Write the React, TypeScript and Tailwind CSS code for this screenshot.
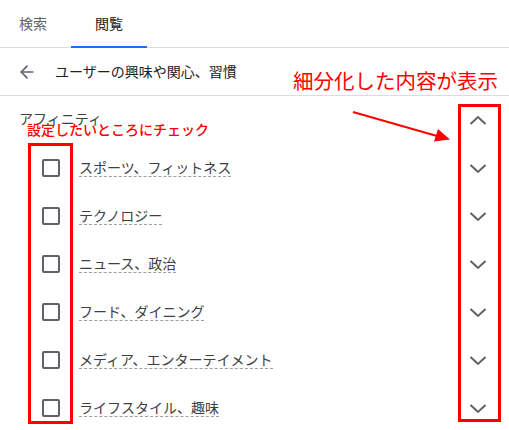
import { ArrowLeft } from 'lucide-react';

const items = [
  'スポーツ、フィットネス',
  'テクノロジー',
  'ニュース、政治',
  'フード、ダイニング',
  'メディア、エンターテイメント',
  'ライフスタイル、趣味',
];

function Chevron({ up }: { up?: boolean }) {
  return (
    <svg width="24" height="24" viewBox="0 0 24 24" className="text-[#5f6368]">
      {up ? (
        <polyline points="4.5,16 12,9 19.5,16" fill="none" stroke="currentColor" strokeWidth="2" />
      ) : (
        <polyline points="4.5,9 12,16 19.5,9" fill="none" stroke="currentColor" strokeWidth="2" />
      )}
    </svg>
  );
}

export default function App() {
  return (
    <div
      className="relative w-[509px] h-[430px] overflow-hidden bg-white text-[14px]"
      style={{ fontFamily: '"Noto Sans CJK JP", "Noto Sans", sans-serif' }}
    >
      {/* Tabs */}
      <div className="flex h-[48px] border-b border-[#dadce0]">
        <div className="w-[71px] pl-[19px] flex items-center text-[#5f6368]">検索</div>
        <div className="relative w-[76px] flex items-center justify-center text-[#202124]">
          閲覧
          <div className="absolute left-0 right-0 bottom-[-1px] h-[2px] bg-[#1a73e8]" />
        </div>
      </div>

      {/* Breadcrumb */}
      <div className="flex items-center h-[48px] border-b border-[#dadce0] pl-[17px]">
        <ArrowLeft className="w-[20px] h-[20px] text-[#5f6368]" strokeWidth={2} />
        <span className="ml-[18px] text-[#202124]">ユーザーの興味や関心、習慣</span>
      </div>

      {/* Affinity heading */}
      <div className="flex items-center justify-between h-[48px] pl-[19px] pr-[19px]">
        <span className="text-[#3c4043] -mt-[4px]">アフィニティ</span>
        <Chevron up />
      </div>

      {items.map((label) => (
        <div key={label} className="flex items-center h-[48px] pl-[42px] pr-[19px]">
          <div className="w-[18px] h-[18px] border-2 border-[#5f6368] rounded-[2px] shrink-0" />
          <span className="ml-[19px] -mt-[2px] text-[#3c4043] leading-[18px] border-b border-dashed border-[#9aa0a6]">
            {label}
          </span>
          <div className="ml-auto">
            <Chevron />
          </div>
        </div>
      ))}

      {/* Annotations */}
      <div className="absolute left-[293px] top-[67px] text-[20.5px] leading-[26px] text-[#ff0000] whitespace-nowrap">
        細分化した内容が表示
      </div>
      <div className="absolute left-[27px] top-[119px] text-[14px] leading-[20px] font-medium text-[#ff0000] whitespace-nowrap">
        設定したいところにチェック
      </div>
      <div className="absolute left-[28px] top-[143px] w-[45px] h-[281px] border-[3px] border-[#ff0000]" />
      <div className="absolute left-[458px] top-[104px] w-[43px] h-[318px] border-[3px] border-[#ff0000]" />
      <svg className="absolute left-0 top-0" width="509" height="430">
        <line x1="353" y1="112" x2="437" y2="136" stroke="#ff0000" strokeWidth="2" />
        <polygon points="450,139.5 434,141.5 438,129" fill="#ff0000" />
      </svg>
    </div>
  );
}
